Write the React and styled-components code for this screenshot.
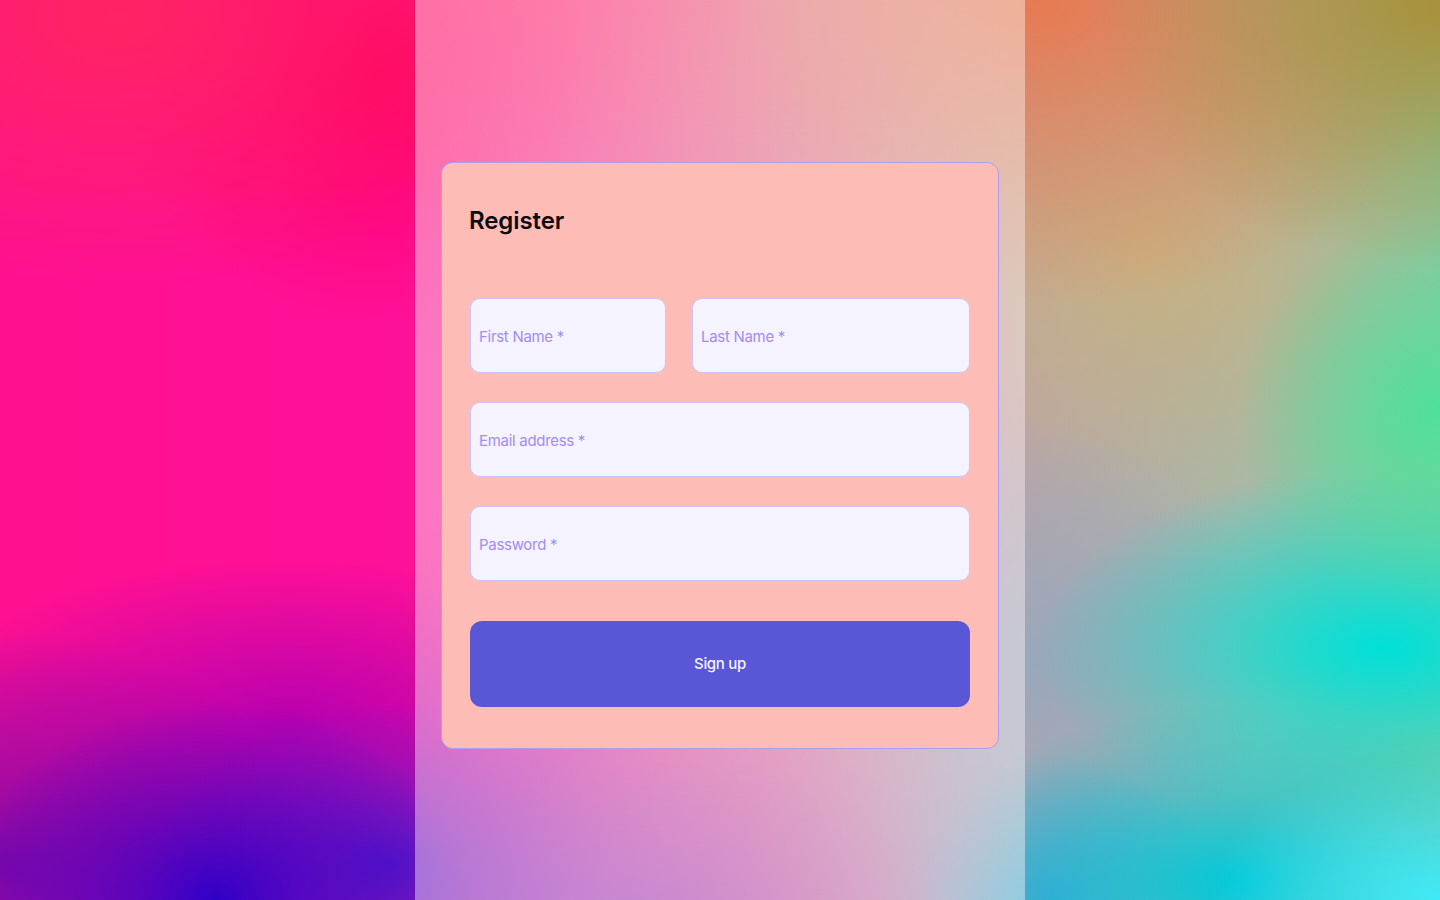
import styled, { createGlobalStyle } from 'styled-components';

const GlobalStyle = createGlobalStyle`
  html, body {
    margin: 0;
    padding: 0;
  }
  body {
    font-family: Inter, 'Noto Sans', 'Liberation Sans', sans-serif;
  }
`;

// Page + background mesh: pink/purple on the left, orange/green/cyan on the right

const Page = styled.div`
  min-height: 100vh;
  display: flex;
  justify-content: center;
  background:
    radial-gradient(ellipse 18% 22% at 15% 100%, #3000c8 0%, rgba(48, 0, 200, 0) 100%),
    radial-gradient(ellipse 16% 18% at 27% 96%, #5a18c8 0%, rgba(90, 24, 200, 0) 100%),
    radial-gradient(ellipse 22% 26% at 0% 96%, #8008a8 0%, rgba(128, 8, 168, 0) 100%),
    radial-gradient(ellipse 26% 18% at 20% 80%, #b800b0 0%, rgba(184, 0, 176, 0) 100%),
    radial-gradient(ellipse 22% 22% at 44% 100%, #9a3ab8 0%, rgba(154, 58, 184, 0) 100%),
    radial-gradient(ellipse 30% 30% at 8% 2%, #ff2462 0%, rgba(255, 36, 98, 0) 100%),
    radial-gradient(ellipse 18% 28% at 26% 8%, #ff0066 0%, rgba(255, 0, 102, 0) 100%),
    radial-gradient(ellipse 16% 24% at 38% 0%, #ff3070 0%, rgba(255, 48, 112, 0) 100%),
    radial-gradient(ellipse 24% 30% at 100% 0%, #a8903a 0%, rgba(168, 144, 58, 0) 100%),
    radial-gradient(ellipse 32% 34% at 72% 0%, #e87a50 0%, rgba(232, 122, 80, 0) 100%),
    radial-gradient(ellipse 14% 22% at 100% 46%, #50e09c 0%, rgba(80, 224, 156, 0) 100%),
    radial-gradient(ellipse 24% 20% at 96% 72%, #00e0d8 0%, rgba(0, 224, 216, 0) 100%),
    radial-gradient(ellipse 16% 16% at 100% 100%, #40eaf8 0%, rgba(64, 234, 248, 0) 100%),
    radial-gradient(ellipse 22% 20% at 86% 98%, #00c8d8 0%, rgba(0, 200, 216, 0) 100%),
    radial-gradient(ellipse 12% 16% at 73% 100%, #4aa0d0 0%, rgba(74, 160, 208, 0) 100%),
    radial-gradient(ellipse 16% 28% at 72% 74%, #98a8bc 0%, rgba(152, 168, 188, 0) 100%),
    radial-gradient(ellipse 22% 30% at 80% 28%, #c8b080 0%, rgba(200, 176, 128, 0) 100%),
    linear-gradient(90deg, #ff1090 0%, #ff1098 28%, #e45890 50%, #bca4a8 71%, #a8b8a8 86%, #88c8a0 100%);
`;

const Panel = styled.main`
  width: 610px;
  min-height: 100vh;
  box-sizing: border-box;
  padding: 10px 0 0 26px;
  display: flex;
  align-items: center;
  background: rgba(255, 255, 255, 0.4);
  backdrop-filter: blur(60px);
  box-shadow: -1px 0 0 rgba(150, 0, 70, 0.12);
`;

// Card

const Card = styled.section`
  width: 500px;
  padding: 42px 28px 41px;
  background: #febcb7;
  border: 1px solid #a8a0f2;
  border-radius: 12px;
`;

const Title = styled.h1`
  margin: 0 0 61px -1px;
  font-size: 24px;
  line-height: 32px;
  font-weight: 600;
  color: #0b0b0f;
  letter-spacing: -0.1px;
`;

const Form = styled.form`
  display: flex;
  flex-direction: column;
  gap: 29px;
`;

const NameRow = styled.div`
  display: grid;
  grid-template-columns: 196px 1fr;
  gap: 26px;
`;

const Input = styled.input`
  height: 75px;
  width: 100%;
  box-sizing: border-box;
  padding: 2px 8px 0;
  background: #f5f3ff;
  border: 1px solid #cbc4fb;
  border-radius: 10px;
  font-family: inherit;
  font-size: 15px;
  color: #2d2a5a;
  outline: none;

  &::placeholder {
    color: #a48cf0;
    letter-spacing: -0.3px;
  }
`;

const SubmitButton = styled.button`
  margin-top: 11px;
  height: 86px;
  border: none;
  border-radius: 12px;
  background: #5957d6;
  color: #f4f2ff;
  font-family: inherit;
  font-size: 15px;
  font-weight: 500;
  letter-spacing: -0.3px;
  cursor: pointer;
`;

export default function App() {
  return (
    <>
      <GlobalStyle />
      <Page>
        <Panel>
          <Card>
            <Title>Register</Title>
            <Form onSubmit={(e) => e.preventDefault()}>
              <NameRow>
                <Input placeholder="First Name *" />
                <Input placeholder="Last Name *" />
              </NameRow>
              <Input placeholder="Email address *" type="email" />
              <Input placeholder="Password *" type="password" />
              <SubmitButton type="submit">Sign up</SubmitButton>
            </Form>
          </Card>
        </Panel>
      </Page>
    </>
  );
}
